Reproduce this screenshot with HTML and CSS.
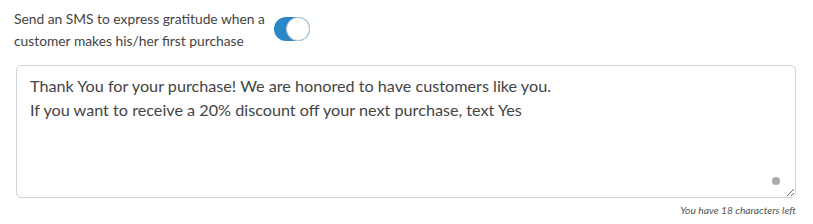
FILE: index.html
```html
<!DOCTYPE html>
<html lang="en">
<head>
    <meta charset="UTF-8">
    <title>SMS gratitude</title>
    <link rel="stylesheet" href="styles.css">
</head>
<body>
    <div class="setting">
        <div class="setting-row">
            <label class="setting-label" for="thanks-toggle">Send an SMS to express gratitude when a customer makes his/her first purchase</label>
            <span class="toggle on" id="thanks-toggle"><span class="knob"></span></span>
        </div>
        <div class="message-box">
            <textarea class="message" id="message">Thank You for your purchase! We are honored to have customers like you.
If you want to receive a 20% discount off your next purchase, text Yes</textarea>
            <span class="dot"></span>
        </div>
        <div class="counter">You have 18 characters left</div>
    </div>
</body>
</html>
```

FILE: styles.css
```css
body {
    margin: 0;
    font-family: Lato, "Open Sans", sans-serif;
    color: #444;
    background: #fff;
}

.setting {
    padding: 8px 17px 0 16px;
}

.setting-row {
    display: flex;
    align-items: center;
    margin-left: -2px;
}

.setting-label {
    width: 256px;
    font-size: 13.8px;
    line-height: 22px;
}

.toggle {
    position: relative;
    width: 36px;
    height: 24px;
    border-radius: 12px;
    background-color: #2b88c8;
    margin-left: 4px;
    margin-top: -3px;
}

.toggle .knob {
    position: absolute;
    right: 0;
    top: 0;
    width: 22px;
    height: 22px;
    border-radius: 50%;
    background: #fff;
    border: 1px solid #c4c8cc;
}

.message-box {
    position: relative;
    margin-top: 13px;
}

.message {
    display: block;
    box-sizing: border-box;
    width: 780px;
    height: 133px;
    padding: 8px 13px;
    border: 1px solid #cfd3d7;
    border-radius: 5px;
    font-family: Lato, "Open Sans", sans-serif;
    font-size: 16.2px;
    line-height: 24px;
    color: #444;
    resize: vertical;
}

.dot {
    position: absolute;
    right: 16px;
    bottom: 13px;
    width: 8px;
    height: 8px;
    border-radius: 50%;
    background: #a9a9a9;
}

.counter {
    width: 780px;
    text-align: right;
    font-size: 10.25px;
    font-style: italic;
    color: #555;
    margin-top: 6px;
}
```
